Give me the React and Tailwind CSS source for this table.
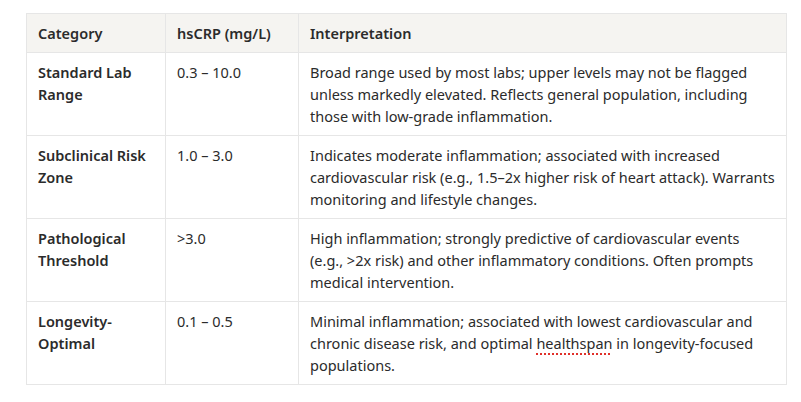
import React from "react";

const rows = [
  {
    cat: ["Standard Lab", "Range"],
    val: "0.3 – 10.0",
    interp: [
      "Broad range used by most labs; upper levels may not be flagged",
      "unless markedly elevated. Reflects general population, including",
      "those with low-grade inflammation.",
    ],
  },
  {
    cat: ["Subclinical Risk", "Zone"],
    val: "1.0 – 3.0",
    interp: [
      "Indicates moderate inflammation; associated with increased",
      "cardiovascular risk (e.g., 1.5–2x higher risk of heart attack). Warrants",
      "monitoring and lifestyle changes.",
    ],
  },
  {
    cat: ["Pathological", "Threshold"],
    val: ">3.0",
    interp: [
      "High inflammation; strongly predictive of cardiovascular events",
      "(e.g., >2x risk) and other inflammatory conditions. Often prompts",
      "medical intervention.",
    ],
  },
  {
    cat: ["Longevity-", "Optimal"],
    val: "0.1 – 0.5",
    interp: [
      "Minimal inflammation; associated with lowest cardiovascular and",
      <>
        chronic disease risk, and optimal{" "}
        <span className="underline decoration-dotted decoration-[#e0302a] decoration-[1.5px] underline-offset-[4px]">
          healthspan
        </span>{" "}
        in longevity-focused
      </>,
      "populations.",
    ],
  },
];

export default function App() {
  return (
    <div
      className="w-[801px] h-[402px] bg-white pt-[13px] pl-[26px] text-[#2b2b2b]"
      style={{ fontFamily: '"Segoe UI", "Noto Sans", "Open Sans", sans-serif' }}
    >
      <table className="border-collapse w-[760px] table-fixed text-[14.5px] leading-[22px]">
        <colgroup>
          <col className="w-[139px]" />
          <col className="w-[133px]" />
          <col className="w-[488px]" />
        </colgroup>
        <thead>
          <tr className="bg-[#f5f4f1]">
            <th className="border border-[#e6e6e6] px-[11px] py-[8px] text-left font-semibold">Category</th>
            <th className="border border-[#e6e6e6] px-[11px] py-[8px] text-left font-semibold">hsCRP (mg/L)</th>
            <th className="border border-[#e6e6e6] px-[11px] py-[8px] text-left font-semibold">Interpretation</th>
          </tr>
        </thead>
        <tbody>
          {rows.map((r, i) => (
            <tr key={i}>
              <td className="border border-[#e6e6e6] px-[11px] py-[8px] align-top font-semibold">
                {r.cat.map((l, j) => (
                  <div key={j} className="whitespace-nowrap">{l}</div>
                ))}
              </td>
              <td className="border border-[#e6e6e6] px-[11px] py-[8px] align-top">{r.val}</td>
              <td className="border border-[#e6e6e6] px-[11px] py-[8px] align-top">
                {r.interp.map((l, j) => (
                  <div key={j} className="whitespace-nowrap">{l}</div>
                ))}
              </td>
            </tr>
          ))}
        </tbody>
      </table>
    </div>
  );
}
